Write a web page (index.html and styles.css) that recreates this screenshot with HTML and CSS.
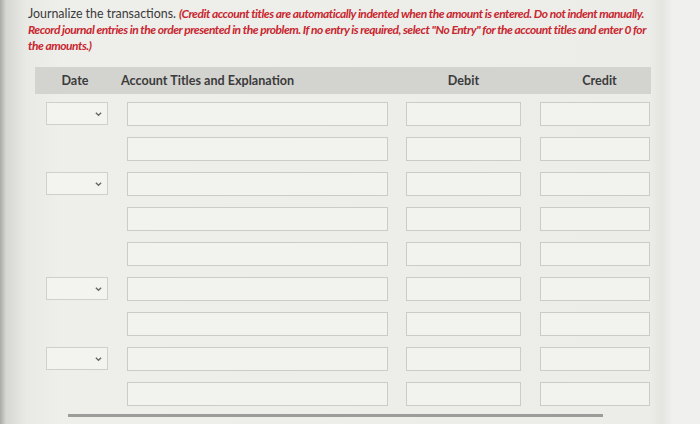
FILE: index.html
```html
<!DOCTYPE html>
<html lang="en">

<head>
    <meta charset="utf-8">
    <meta name="viewport" content="width=device-width, initial-scale=1.0">
    <title>Journal entries</title>
    <link rel="stylesheet" href="styles.css">
</head>

<body>

    <section class="opgave">
        <p class="tekst">Journalize the transactions. <em>(Credit account titles are automatically indented when the amount is entered. Do not indent manually.<br>
            Record journal entries in the order presented in the problem. If no entry is required, select "No Entry" for the account titles and enter 0 for<br>
            the amounts.)</em></p>
    </section>

    <section class="journal">
        <div class="hoved">
            <span class="h-dato">Date</span>
            <span class="h-konto">Account Titles and Explanation</span>
            <span class="h-debet">Debit</span>
            <span class="h-kredit">Credit</span>
        </div>

        <div class="raekke">
            <div class="dato"><span class="vaelg"><svg viewBox="0 0 8 6"><path d="M1 1.5l3 3 3-3"/></svg></span></div>
            <span class="felt konto"></span><span class="felt debet"></span><span class="felt kredit"></span>
        </div>
        <div class="raekke">
            <div class="dato"></div>
            <span class="felt konto"></span><span class="felt debet"></span><span class="felt kredit"></span>
        </div>
        <div class="raekke">
            <div class="dato"><span class="vaelg"><svg viewBox="0 0 8 6"><path d="M1 1.5l3 3 3-3"/></svg></span></div>
            <span class="felt konto"></span><span class="felt debet"></span><span class="felt kredit"></span>
        </div>
        <div class="raekke">
            <div class="dato"></div>
            <span class="felt konto"></span><span class="felt debet"></span><span class="felt kredit"></span>
        </div>
        <div class="raekke">
            <div class="dato"></div>
            <span class="felt konto"></span><span class="felt debet"></span><span class="felt kredit"></span>
        </div>
        <div class="raekke">
            <div class="dato"><span class="vaelg"><svg viewBox="0 0 8 6"><path d="M1 1.5l3 3 3-3"/></svg></span></div>
            <span class="felt konto"></span><span class="felt debet"></span><span class="felt kredit"></span>
        </div>
        <div class="raekke">
            <div class="dato"></div>
            <span class="felt konto"></span><span class="felt debet"></span><span class="felt kredit"></span>
        </div>
        <div class="raekke">
            <div class="dato"><span class="vaelg"><svg viewBox="0 0 8 6"><path d="M1 1.5l3 3 3-3"/></svg></span></div>
            <span class="felt konto"></span><span class="felt debet"></span><span class="felt kredit"></span>
        </div>
        <div class="raekke">
            <div class="dato"></div>
            <span class="felt konto"></span><span class="felt debet"></span><span class="felt kredit"></span>
        </div>

        <div class="bund"></div>
    </section>

</body></html>
```

FILE: styles.css
```css
body {
    box-sizing: border-box;
    margin: 0;
    height: 424px;
    overflow: hidden;
    font-family: Lato, 'Open Sans', sans-serif;
    color: #3a3a3a;
    background: linear-gradient(to right, #a9a9a7 0, #d6d6d2 6px, #e9e9e5 26px, #eeeeea 60px, #ececE8 650px, #e4e4e1 662px, #f0f0ee 672px);
}

.opgave {
    padding: 6px 0 0 28px;
}

.tekst {
    margin: 0;
    font-size: 12.4px;
    line-height: 16px;
    white-space: nowrap;
}

.tekst em {
    color: #c8262f;
    font-size: 12px;
    font-weight: bold;
    font-style: italic;
    letter-spacing: -0.48px;
}

.journal {
    width: 616px;
    margin: 13px 0 0 35px;
}

.hoved {
    display: grid;
    grid-template-columns: 86px 276px 133px 121px;
    align-items: center;
    height: 27px;
    background: #d3d3d0;
    font-family: Lato, sans-serif;
    font-size: 12.6px;
    font-weight: bold;
    color: #3b3b3b;
}

.h-dato {
    text-align: center;
    padding-right: 6px;
}

.h-debet {
    text-align: center;
}

.h-kredit {
    text-align: center;
    padding-left: 18px;
}

.raekke {
    display: grid;
    grid-template-columns: 86px 276px 133px 121px;
    align-items: start;
    margin-top: 11px;
    height: 24px;
}

.hoved + .raekke {
    margin-top: 8px;
}

.dato {
    padding-left: 11px;
}

.vaelg {
    display: flex;
    justify-content: flex-end;
    align-items: center;
    box-sizing: border-box;
    width: 62px;
    height: 23px;
    padding-right: 5px;
    border: 1px solid #cfcfcb;
    background: #f3f3f0;
}

.vaelg svg {
    width: 7px;
    height: 6px;
    fill: none;
    stroke: #6a6a6a;
    stroke-width: 1.6;
}

.felt {
    display: block;
    box-sizing: border-box;
    height: 24px;
    border: 1px solid #cbcbc7;
    background: #f2f2ef;
}

.konto {
    margin-left: 6px;
    width: 261px;
}

.debet {
    margin-left: 9px;
    width: 115px;
}

.kredit {
    margin-left: 10px;
    width: 110px;
}

.bund {
    width: 535px;
    height: 3px;
    margin: 8px 0 0 33px;
    background: #9c9c9a;
}
```
